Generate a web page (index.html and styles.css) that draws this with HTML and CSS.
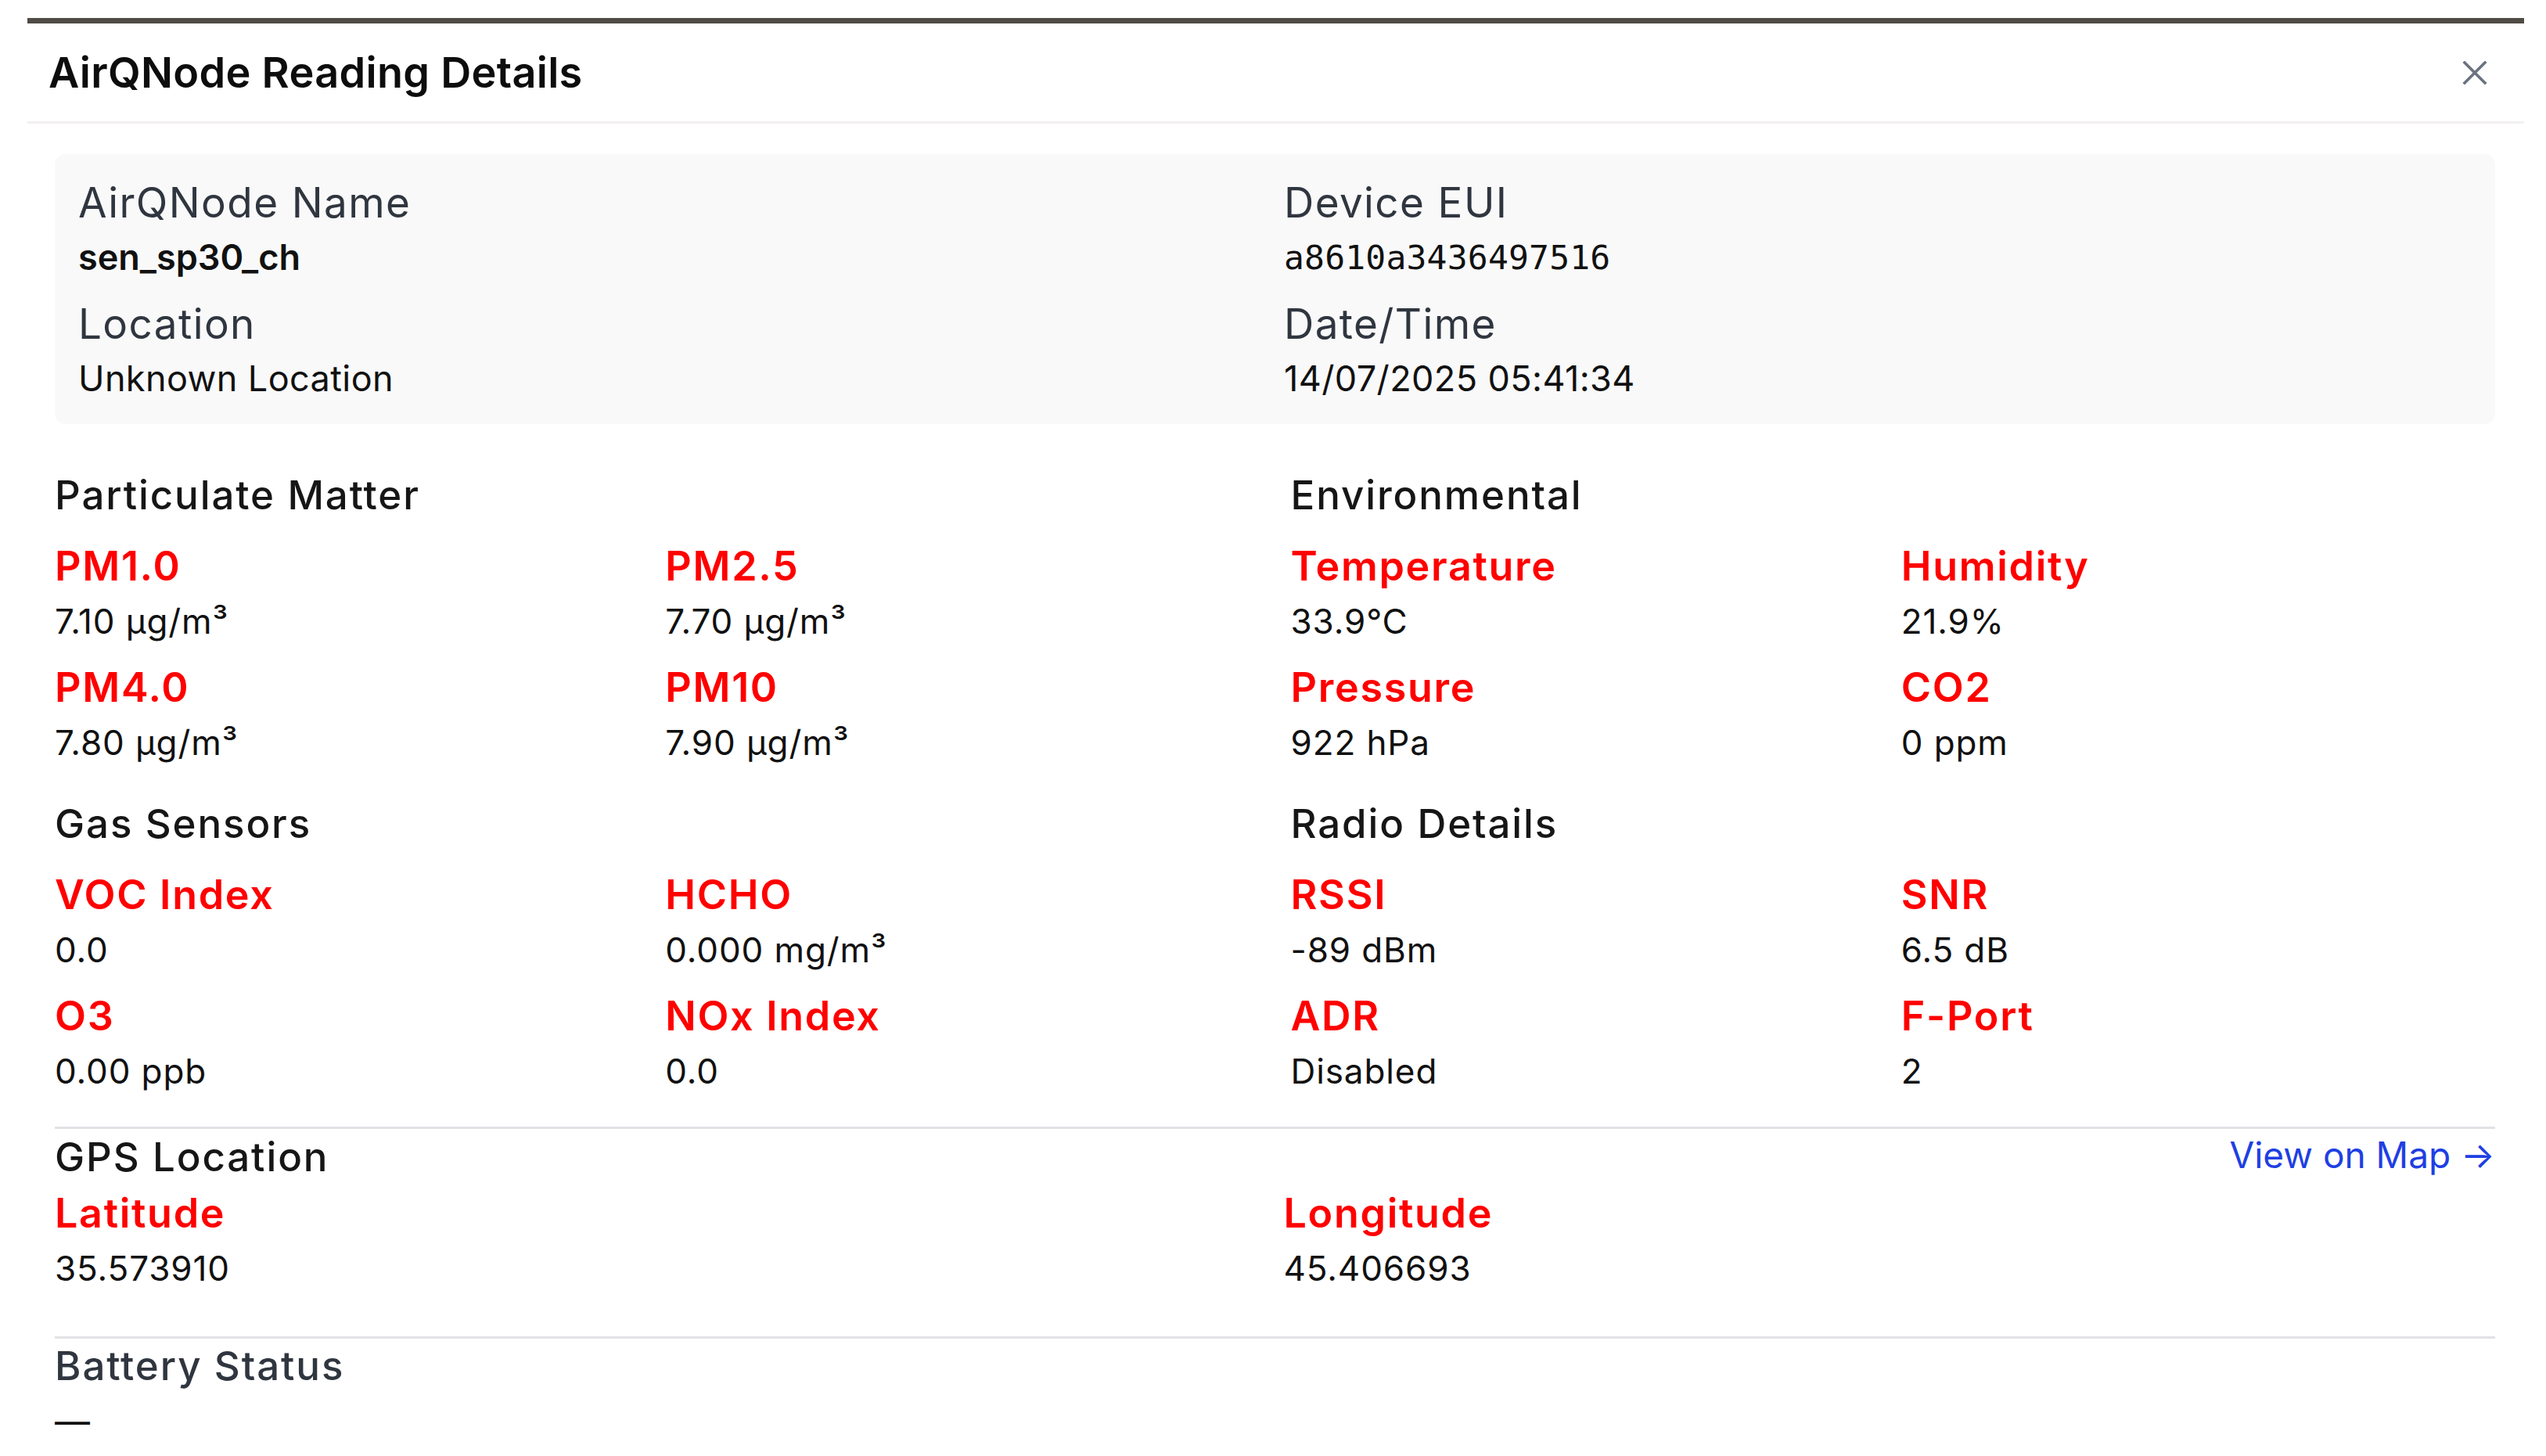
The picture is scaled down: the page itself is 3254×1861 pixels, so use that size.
FILE: index.html
```html
<!DOCTYPE html>
<html lang="en">
<head>
    <meta charset="UTF-8">
    <meta name="viewport" content="width=device-width, initial-scale=1.0">
    <title>AirQNode Reading Details</title>
    <link rel="stylesheet" href="styles.css">
</head>
<body>
    <div class="backdrop-edge"></div>
    <div class="modal">
        <div class="modal-header">
            <h2 class="modal-title">AirQNode Reading Details</h2>
            <button class="close-btn" aria-label="Close">
                <svg width="32" height="30" viewBox="0 0 32 30">
                    <path d="M3 2 L29 28 M29 2 L3 28" stroke="#6b7280" stroke-width="3.6" stroke-linecap="square" fill="none"/>
                </svg>
            </button>
        </div>
        <div class="modal-body">
            <div class="info-box">
                <div class="info-field">
                    <div class="info-label">AirQNode Name</div>
                    <div class="info-value strong">sen_sp30_ch</div>
                </div>
                <div class="info-field">
                    <div class="info-label">Device EUI</div>
                    <div class="info-value mono">a8610a3436497516</div>
                </div>
                <div class="info-field">
                    <div class="info-label">Location</div>
                    <div class="info-value">Unknown Location</div>
                </div>
                <div class="info-field">
                    <div class="info-label">Date/Time</div>
                    <div class="info-value">14/07/2025 05:41:34</div>
                </div>
            </div>

            <div class="sensor-groups">
                <div class="group">
                    <h3 class="group-title">Particulate Matter</h3>
                    <div class="metrics">
                        <div class="metric"><div class="metric-label">PM1.0</div><div class="metric-value">7.10 µg/m³</div></div>
                        <div class="metric"><div class="metric-label">PM2.5</div><div class="metric-value">7.70 µg/m³</div></div>
                        <div class="metric"><div class="metric-label">PM4.0</div><div class="metric-value">7.80 µg/m³</div></div>
                        <div class="metric"><div class="metric-label">PM10</div><div class="metric-value">7.90 µg/m³</div></div>
                    </div>
                </div>
                <div class="group">
                    <h3 class="group-title">Environmental</h3>
                    <div class="metrics">
                        <div class="metric"><div class="metric-label">Temperature</div><div class="metric-value">33.9°C</div></div>
                        <div class="metric"><div class="metric-label">Humidity</div><div class="metric-value">21.9%</div></div>
                        <div class="metric"><div class="metric-label">Pressure</div><div class="metric-value">922 hPa</div></div>
                        <div class="metric"><div class="metric-label">CO2</div><div class="metric-value">0 ppm</div></div>
                    </div>
                </div>
                <div class="group">
                    <h3 class="group-title">Gas Sensors</h3>
                    <div class="metrics">
                        <div class="metric"><div class="metric-label">VOC Index</div><div class="metric-value">0.0</div></div>
                        <div class="metric"><div class="metric-label">HCHO</div><div class="metric-value">0.000 mg/m³</div></div>
                        <div class="metric"><div class="metric-label">O3</div><div class="metric-value">0.00 ppb</div></div>
                        <div class="metric"><div class="metric-label">NOx Index</div><div class="metric-value">0.0</div></div>
                    </div>
                </div>
                <div class="group">
                    <h3 class="group-title">Radio Details</h3>
                    <div class="metrics">
                        <div class="metric"><div class="metric-label">RSSI</div><div class="metric-value">-89 dBm</div></div>
                        <div class="metric"><div class="metric-label">SNR</div><div class="metric-value">6.5 dB</div></div>
                        <div class="metric"><div class="metric-label">ADR</div><div class="metric-value">Disabled</div></div>
                        <div class="metric"><div class="metric-label">F-Port</div><div class="metric-value">2</div></div>
                    </div>
                </div>
            </div>

            <div class="gps-section">
                <div class="gps-head">
                    <h3 class="group-title">GPS Location</h3>
                    <a class="map-link" href="#">View on Map →</a>
                </div>
                <div class="gps-grid">
                    <div class="metric"><div class="metric-label">Latitude</div><div class="metric-value">35.573910</div></div>
                    <div class="metric"><div class="metric-label">Longitude</div><div class="metric-value">45.406693</div></div>
                </div>
            </div>

            <div class="battery-section">
                <h3 class="group-title muted">Battery Status</h3>
                <div class="metric-value battery-value">—</div>
            </div>
        </div>
    </div>
</body>
</html>
```

FILE: styles.css
```css
body {
    margin: 0;
    padding: 0;
    background-color: #fff;
    font-family: Inter, "Noto Sans", sans-serif;
    color: #111;
    overflow: hidden;
}
.backdrop-edge {
    margin: 23px 28px 0 35px;
    height: 7px;
    background-color: #4f4b45;
}
.modal {
    margin: 0 28px 0 35px;
    background-color: #fff;
}
.modal-header {
    height: 125px;
    display: flex;
    justify-content: space-between;
    align-items: center;
    padding: 0 47px 0 27px;
    border-bottom: 3px solid #f3f0f1;
}
.modal-title {
    margin: 0;
    font-size: 54px;
    font-weight: 600;
    line-height: 64px;
    letter-spacing: 0.3px;
    color: #0d0d0d;
}
.close-btn {
    border: none;
    background: none;
    padding: 0;
    display: flex;
}
.modal-body {
    padding: 39px 37px 0 35px;
}
.info-box {
    background-color: #f9f9fa;
    border-radius: 14px;
    padding: 30px;
    display: grid;
    grid-template-columns: 1fr 1fr;
    column-gap: 23px;
    row-gap: 25px;
}
.info-label {
    font-size: 53px;
    line-height: 64px;
    letter-spacing: 1.4px;
    color: #30363f;
}
.info-value {
    margin-top: 10px;
    font-size: 45px;
    line-height: 56px;
    letter-spacing: 0.4px;
    color: #111;
}
.info-value.strong {
    font-weight: 600;
    letter-spacing: 0;
}
.info-value.mono {
    font-family: "DejaVu Sans Mono", "Liberation Mono", monospace;
    font-size: 43px;
    letter-spacing: 0.2px;
}
.sensor-groups {
    margin-top: 60px;
    display: grid;
    grid-template-columns: 1fr 1fr;
    column-gap: 40px;
    row-gap: 46px;
}
.group-title {
    margin: 0;
    font-size: 51px;
    font-weight: 500;
    line-height: 62px;
    letter-spacing: 1.9px;
    color: #161616;
}
.group-title.muted {
    color: #30363f;
}
.metrics {
    margin-top: 28px;
    display: grid;
    grid-template-columns: 1fr 1fr;
    column-gap: 21px;
    row-gap: 26px;
}
.metric-label {
    font-size: 52px;
    font-weight: 600;
    line-height: 64px;
    letter-spacing: 1.7px;
    color: #ff0000;
}
.metric-value {
    margin-top: 11px;
    font-size: 44px;
    line-height: 54px;
    letter-spacing: 0.9px;
    color: #111;
}
.gps-section {
    margin-top: 44px;
    border-top: 3px solid #e2e2e6;
    padding-top: 5px;
}
.gps-head {
    display: flex;
    justify-content: space-between;
    align-items: flex-start;
}
.map-link {
    font-size: 46px;
    line-height: 56px;
    color: #1f3fe3;
    text-decoration: none;
}
.gps-grid {
    margin-top: 9px;
    display: grid;
    grid-template-columns: 1fr 1fr;
    column-gap: 22px;
}
.battery-section {
    margin-top: 60px;
    border-top: 3px solid #e2e2e6;
    padding-top: 4px;
}
.battery-value {
    margin-top: 13px;
    font-size: 45px;
}
```
